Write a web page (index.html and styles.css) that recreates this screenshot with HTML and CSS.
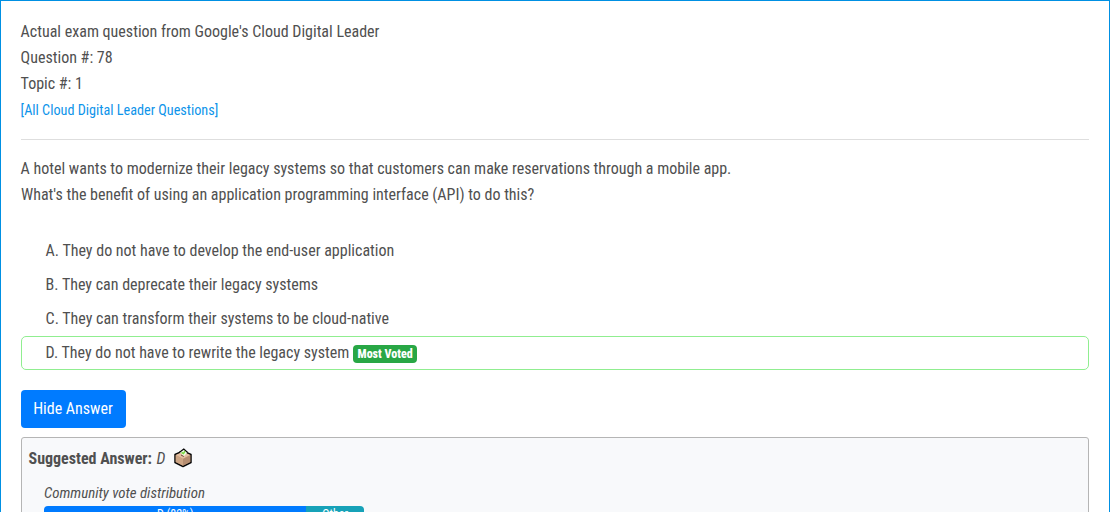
FILE: index.html
```html
<!DOCTYPE html>
<html lang="en">
<head>
<meta charset="utf-8">
<title>Cloud Digital Leader - Question 78</title>
<link rel="stylesheet" href="styles.css">
</head>
<body>
<main class="discussion">
  <header class="question-header">
    <div>Actual exam question from Google's Cloud Digital Leader</div>
    <div>Question #: 78</div>
    <div>Topic #: 1</div>
    <a class="all-questions" href="#">[All Cloud Digital Leader Questions]</a>
  </header>
  <section class="question-body">
    <p class="question-text">A hotel wants to modernize their legacy systems so that customers can make reservations through a mobile app.<br>What's the benefit of using an application programming interface (API) to do this?</p>
    <ul class="choices">
      <li class="choice">A. They do not have to develop the end-user application</li>
      <li class="choice">B. They can deprecate their legacy systems</li>
      <li class="choice">C. They can transform their systems to be cloud-native</li>
      <li class="choice voted">D. They do not have to rewrite the legacy system <span class="badge">Most Voted</span></li>
    </ul>
    <button class="toggle" type="button">Hide Answer</button>
    <div class="answer">
      <div class="suggested">
        <strong>Suggested Answer:</strong><em>D</em>
        <svg class="ballot" width="20" height="20" viewBox="0 0 20 20">
          <path d="M2 6.500 10 3l8 3.500v8L10 18.500 2 14.500z" fill="#c69c7b" stroke="#080808" stroke-width="1.500" stroke-linejoin="round"/>
          <path d="M2.800 6.900 10 3.700l7.200 3.200L10 10.800z" fill="#e3bea0"/>
          <path d="M2.700 7.200 10 11v6.700l-7.300-3.600z" fill="#cda584"/>
          <path d="M10 11l7.300-3.800v6.900L10 17.700z" fill="#b58d70"/>
          <path d="M6.800 4.300 10.800 1l3.600 3.400-3.500 3.800z" fill="#eefbe5"/>
          <path d="M6.500 4.300 10.800 1l3.800 3.500" fill="none" stroke="#080808" stroke-width="1.200"/>
          <path d="M8.500 4.500 10.500 5.500l1.500-2.300" fill="none" stroke="#7bd63f" stroke-width="1.500"/>
          <path d="M8 7l2.800 1.500" stroke="#6b4d3a"/>
        </svg>
      </div>
      <div class="votes">
        <div class="votes-title">Community vote distribution</div>
        <div class="vote-bar">
          <div class="vote vote-d" style="width:82%">D (82%)</div>
          <div class="vote vote-other" style="width:18%">Other</div>
        </div>
      </div>
    </div>
  </section>
</main>
</body>
</html>
```
FILE: styles.css
```css
* { box-sizing: border-box; }
body {
  margin: 0;
  height: 512px;
  overflow: hidden;
  background: #fff;
  color: #505050;
  font: 400 16px/26px "Roboto Condensed", Roboto, sans-serif;
}
.discussion { height: 512px; overflow: hidden; border: 1px solid #0090e3; border-bottom: 0; padding: 18px 20px 0; }
.question-header { height: 121px; border-bottom: 1px solid #dedede; }
.question-header, .question-text { text-indent: -0.4px; }
.all-questions { display: block; font-size: 14.2px; color: #0d94ea; text-decoration: none; line-height: 26px; }
.question-body { padding-top: 16px; }
.question-text { margin: 0; }
.choices { list-style: none; margin: 26px 0 20px; padding: 0; }
.choice { height: 34px; padding: 3px 23.6px; border: 1px solid transparent; }
.voted { border-color: #90ee90; border-radius: 5px; }
.badge {
  display: inline-block;
  padding: 3px 4.600px;
  border-radius: 4px;
  background: #28a745;
  color: #fff;
  font-size: 12px;
  font-weight: 800;
  line-height: 12px;
  vertical-align: baseline;
}
.toggle {
  display: block;
  width: 105px;
  height: 38px;
  padding: 0 1px 0 0;
  border: 0;
  border-radius: 4px;
  background: #007bff;
  color: #fff;
  font: inherit;
}
.answer {
  height: 150px;
  margin-top: 9px;
  padding: 8px 6.500px;
  border: 1px solid #b5b5b5;
  border-radius: 3px;
  background: #f8f9fb;
}
.suggested { display: flex; align-items: center; height: 26px; }
.suggested em { margin-left: 4.500px; }
.ballot { margin: -2px 0 0 8px; }
.votes { width: 320px; margin: 9px 0 0 15.500px; }
.votes-title { height: 25px; font-size: 14.900px; line-height: 24px; font-style: italic; }
.vote-bar { display: flex; height: 16px; overflow: hidden; border-radius: 4px; }
.vote { color: #fff; font-size: 12px; line-height: 16px; text-align: center; }
.vote-d { background: #007bff; }
.vote-other { background: #17a2b8; }
```
